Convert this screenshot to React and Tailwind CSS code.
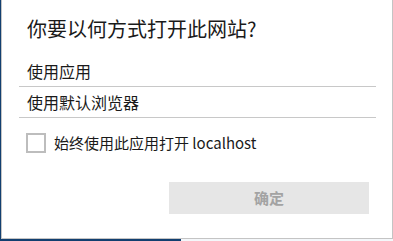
export default function App() {
  const font = { fontFamily: '"Noto Sans CJK SC", "Microsoft YaHei", sans-serif' };
  return (
    <div className="w-[393px] h-[241px] bg-white overflow-hidden flex flex-col" style={font}>
      <div className="flex h-[239px]">
        <div className="w-px bg-[#123f70]" />
        <div className="flex-1 flex flex-col border-l border-r border-b border-[#c4c4c4] bg-white">
          <div className="pl-[25px] pt-[16px] h-[56px] text-[20px] leading-[26px] text-[#1a1a1a]">
            你要以何方式打开此网站?
          </div>
          <div className="ml-[17px] mr-[16px] flex flex-col">
            <div className="h-[31px] flex items-center pl-[8px] text-[16px] text-[#1a1a1a] border-b border-[#c8c8c8]">
              使用应用
            </div>
            <div className="h-[31px] flex items-center pl-[8px] text-[16px] text-[#1a1a1a] border-b border-[#c8c8c8]">
              使用默认浏览器
            </div>
          </div>
          <div className="mt-[15px] h-[20px] pl-[24px] flex items-center gap-[8px]">
            <div className="w-[20px] h-[20px] border-2 border-[#bdbdbd] bg-white" />
            <span className="text-[15px] leading-[20px] text-[#1a1a1a]">始终使用此应用打开 localhost</span>
          </div>
          <div className="mt-[29px] flex justify-end pr-[23px]">
            <div className="w-[200px] h-[32px] bg-[#e6e6e6] flex items-center justify-center text-[15px] font-bold text-[#a3a3a3]">
              确定
            </div>
          </div>
        </div>
      </div>
      <div className="flex h-[2px]">
        <div className="w-[181px] bg-[#123f70]" />
        <div className="flex-1 bg-[#f4f7fa]" />
      </div>
    </div>
  );
}
